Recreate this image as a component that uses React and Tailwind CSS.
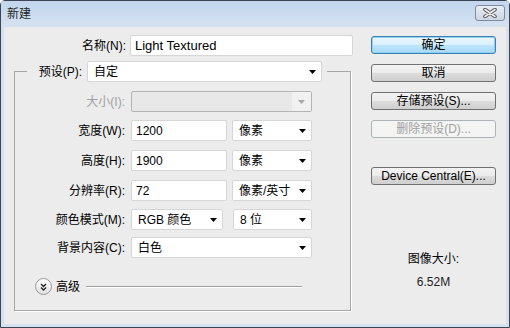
import React from "react";

function Arrow({ color = "#000" }) {
  return (
    <svg width="7" height="4" viewBox="0 0 7 4">
      <path d="M0 0h7L3.5 4z" fill={color} />
    </svg>
  );
}

function Select({ value, width }) {
  return (
    <div
      className="flex h-[21px] items-center justify-between rounded-[2px] border border-[#d6d6d6] bg-white pl-[6px] pr-[5px]"
      style={{ width }}
    >
      <span>{value}</span>
      <Arrow />
    </div>
  );
}

function Input({ value, width }) {
  return (
    <div
      className="flex h-[21px] items-center rounded-[2px] border border-[#d6d6d6] bg-white pl-[4px]"
      style={{ width }}
    >
      {value}
    </div>
  );
}

function Row({ label, children, className = "" }) {
  return (
    <div className={`flex items-center ${className}`}>
      <span className="w-[110px] text-right">{label}</span>
      <div className="ml-[6px] flex gap-[5px]">{children}</div>
    </div>
  );
}

function Button({ children, primary, disabled, className = "" }) {
  let look =
    "border-[#707070] bg-[linear-gradient(#f3f3f3,#ebebeb_50%,#dddddd_50%,#cfcfcf)] text-black";
  if (primary)
    look =
      "border-[#3c7fb1] bg-[linear-gradient(#eaf6fd,#d9f0fc_50%,#bee6fd_50%,#a7d9f5)] text-black shadow-[inset_0_0_0_1px_#8ed1f5]";
  if (disabled) look = "border-[#adb2b5] bg-[#f4f4f4] text-[#a0a0a0]";
  return (
    <div
      className={`flex h-[18px] w-[125px] items-center justify-center rounded-[3px] border ${look} ${className}`}
    >
      {children}
    </div>
  );
}

export default function App() {
  return (
    <div className="flex h-[328px] w-[510px] flex-col rounded-t-[5px] border border-[#3a4452] bg-[#d4e1f0] font-['Liberation_Sans','Noto_Sans_CJK_SC',sans-serif] text-[12px] leading-[14px] text-black">
      {/* title bar */}
      <div className="flex h-[26px] items-start justify-between bg-linear-to-b from-[#c3d6ed] to-[#d5e2f1] pl-[6px] pr-[4px]">
        <span className="mt-[6px] text-[#1e1e1e]">新建</span>
        <div className="mt-[4px] flex h-[16px] w-[30px] items-center justify-center rounded-[3px] border border-[#7f8b9b] bg-linear-to-b from-[#e8eef5] to-[#cbd7e5]">
          <svg width="14" height="10" viewBox="0 0 14 10">
            <path
              d="M2 1.5l10 7M12 1.5l-10 7"
              stroke="#555"
              strokeWidth="3.6"
              strokeLinecap="round"
            />
            <path
              d="M2 1.5l10 7M12 1.5l-10 7"
              stroke="#f2f2f2"
              strokeWidth="1.6"
              strokeLinecap="round"
            />
          </svg>
        </div>
      </div>

      {/* body */}
      <div className="mx-[3px] mb-[3px] flex flex-1 bg-[#ececec]">
        {/* left column */}
        <div className="w-[356px] pt-[8px]">
          <div className="flex items-center">
            <span className="w-[122px] text-right">名称(N):</span>
            <div className="ml-[4px] flex h-[21px] w-[223px] items-center rounded-[2px] border border-[#d6d6d6] bg-white pl-[4px] text-[13px]">
              Light Textured
            </div>
          </div>

          <fieldset className="ml-[10px] mt-[5px] w-[337px] border border-[#a6a6a6] pb-[15px] shadow-[1px_1px_0_#fff]">
            <legend className="ml-[12px] flex items-center pl-[8px] pr-[5px]">
              <span className="w-[47px] text-right">预设(P):</span>
              <div className="ml-[5px]">
                <Select value="自定" width={235} />
              </div>
            </legend>

            <Row label={<span className="text-[#a0a0a0]">大小(I):</span>} className="mt-[9px]">
              <div className="flex h-[21px] w-[181px] rounded-[2px] border border-[#b4b4b4] bg-[#e8e8e8]">
                <div className="flex-1" />
                <div className="flex w-[19px] items-center justify-center bg-[#f1f1f1]">
                  <Arrow color="#a8a8a8" />
                </div>
              </div>
            </Row>
            <Row label="宽度(W):" className="mt-[8px]">
              <Input value="1200" width={96} />
              <Select value="像素" width={80} />
            </Row>
            <Row label="高度(H):" className="mt-[9px]">
              <Input value="1900" width={96} />
              <Select value="像素" width={80} />
            </Row>
            <Row label="分辨率(R):" className="mt-[9px]">
              <Input value="72" width={96} />
              <Select value="像素/英寸" width={80} />
            </Row>
            <Row label="颜色模式(M):" className="mt-[8px]">
              <Select value="RGB 颜色" width={92} />
              <div className="ml-[5px]">
                <Select value="8 位" width={79} />
              </div>
            </Row>
            <Row label="背景内容(C):" className="mt-[7px]">
              <Select value="白色" width={181} />
            </Row>

            <div className="mt-[20px] flex items-center pl-[20px]">
              <div className="flex h-[17px] w-[17px] items-center justify-center rounded-full border border-[#9a9a9a] bg-linear-to-b from-[#ffffff] to-[#e0e0e0]">
                <svg width="7" height="8" viewBox="0 0 7 8">
                  <path
                    d="M1 1l2.5 2.5L6 1M1 4.5L3.5 7L6 4.5"
                    stroke="#222"
                    strokeWidth="1.3"
                    fill="none"
                  />
                </svg>
              </div>
              <span className="ml-[4px]">高级</span>
              <div className="ml-[6px] h-px w-[216px] bg-[#a0a0a0] shadow-[0_1px_0_#fff]" />
            </div>
          </fieldset>
        </div>

        {/* right column */}
        <div className="pl-[11px] pt-[9px]">
          <Button primary>确定</Button>
          <Button className="mt-[10px]">取消</Button>
          <Button className="mt-[10px]">存储预设(S)...</Button>
          <Button disabled className="mt-[10px]">删除预设(D)...</Button>
          <Button className="mt-[29px]">Device Central(E)...</Button>
          <div className="mt-[67px] w-[125px] text-center">图像大小:</div>
          <div className="mt-[9px] w-[125px] text-center text-[#222]">6.52M</div>
        </div>
      </div>
    </div>
  );
}
